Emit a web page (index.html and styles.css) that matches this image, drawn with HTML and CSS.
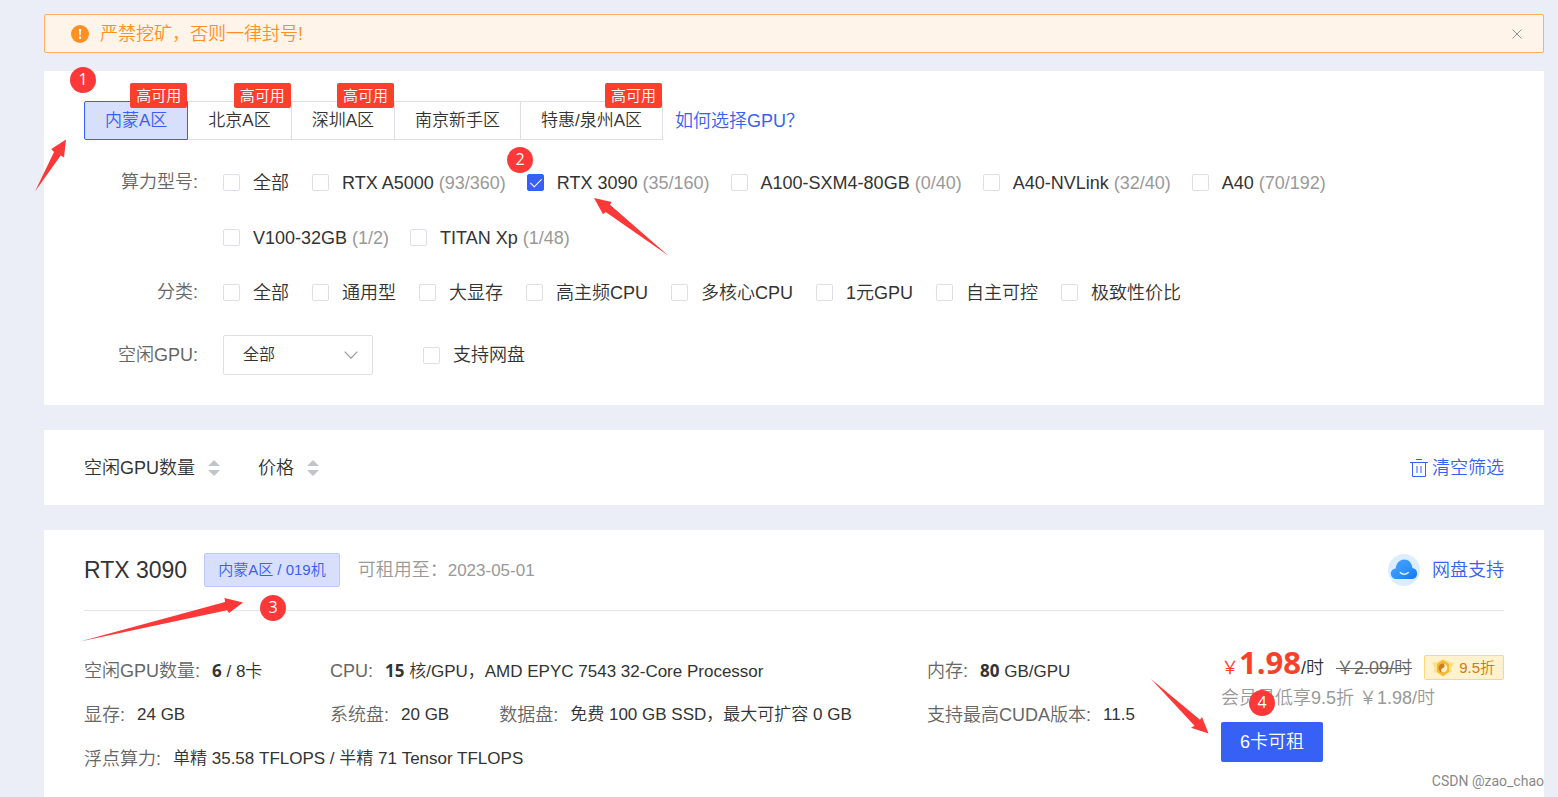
FILE: index.html
```html
<!DOCTYPE html>
<html lang="zh-CN">
<head>
<meta charset="utf-8">
<meta name="viewport" content="width=device-width, initial-scale=1">
<title>GPU 租用</title>
<link rel="stylesheet" href="styles.css">
</head>
<body>
<main class="page">
  <div class="alert" role="alert">
    <svg class="alert-icon" viewBox="0 0 18 18" aria-hidden="true"><circle cx="9" cy="9" r="9" fill="#ff9021"/><path d="M7.900 4h2.200l-.4 6.200H8.300z" fill="#fff"/><circle cx="9" cy="12.800" r="1.200" fill="#fff"/></svg>
    <p class="alert-text">严禁挖矿，否则一律封号!</p>
    <button class="alert-close" type="button" aria-label="关闭"><svg viewBox="0 0 12 12"><path d="M1.500 1.500l9 9M10.500 1.500l-9 9" fill="none" stroke="#909399"/></svg></button>
  </div>

  <section class="card filters">
    <div class="regions">
      <div class="tabs">
        <button class="tab tab-active" type="button">内蒙A区<span class="tab-badge">高可用</span></button>
        <button class="tab" type="button">北京A区<span class="tab-badge">高可用</span></button>
        <button class="tab" type="button">深圳A区<span class="tab-badge">高可用</span></button>
        <button class="tab" type="button">南京新手区</button>
        <button class="tab" type="button">特惠/泉州A区<span class="tab-badge">高可用</span></button>
      </div>
      <a class="link" href="#">如何选择GPU？</a>
    </div>

    <div class="row">
      <span class="row-label">算力型号:</span>
      <div class="options">
        <label class="option"><input type="checkbox">全部</label>
        <label class="option model"><input type="checkbox"><span>RTX A5000 <span class="muted">(93/360)</span></span></label>
        <label class="option model"><input type="checkbox" checked><span>RTX 3090 <span class="muted">(35/160)</span></span></label>
        <label class="option model"><input type="checkbox"><span>A100-SXM4-80GB <span class="muted">(0/40)</span></span></label>
        <label class="option model"><input type="checkbox"><span>A40-NVLink <span class="muted">(32/40)</span></span></label>
        <label class="option model"><input type="checkbox"><span>A40 <span class="muted">(70/192)</span></span></label>
        <label class="option model"><input type="checkbox"><span>V100-32GB <span class="muted">(1/2)</span></span></label>
        <label class="option model"><input type="checkbox"><span>TITAN Xp <span class="muted">(1/48)</span></span></label>
      </div>
    </div>
    <div class="row">
      <span class="row-label">分类:</span>
      <div class="options">
        <label class="option"><input type="checkbox">全部</label>
        <label class="option"><input type="checkbox">通用型</label>
        <label class="option"><input type="checkbox">大显存</label>
        <label class="option"><input type="checkbox">高主频CPU</label>
        <label class="option"><input type="checkbox">多核心CPU</label>
        <label class="option"><input type="checkbox">1元GPU</label>
        <label class="option"><input type="checkbox">自主可控</label>
        <label class="option"><input type="checkbox">极致性价比</label>
      </div>
    </div>
    <div class="row row-last">
      <label class="row-label" for="idle">空闲GPU:</label>
      <div class="select-wrap">
        <select id="idle" class="select"><option>全部</option></select>
        <svg class="select-arrow" viewBox="0 0 14 8" aria-hidden="true"><path d="M.7.7L7 7.200 13.300.7" fill="none" stroke="#999" stroke-width="1.200"/></svg>
      </div>
      <label class="option"><input type="checkbox">支持网盘</label>
    </div>

    <span class="step step-1">1</span>
    <span class="step step-2">2</span>
    <svg class="arrow arrow-1" viewBox="0 0 32 53" aria-hidden="true"><path d="M31 .5L16.300 10l2.700 3L0 52.500 25.700 16.500l3.300 2z"/></svg>
    <svg class="arrow arrow-2" viewBox="0 0 75 58" aria-hidden="true"><path d="M0 0l17.700 4-1.700 2.700L74.500 57.700 11.700 14 9 16.300z"/></svg>
  </section>

  <section class="card sortbar">
    <button class="sort" type="button">空闲GPU数量<svg viewBox="0 0 12 16"><path d="M6 0l6 6H0zM0 10h12l-6 6z" fill="#c0c4cc"/></svg></button>
    <button class="sort" type="button">价格<svg viewBox="0 0 12 16"><path d="M6 0l6 6H0zM0 10h12l-6 6z" fill="#c0c4cc"/></svg></button>
    <button class="clear" type="button"><svg viewBox="0 0 18 18"><path d="M0 3.500h18M6 .5h6M2.500 3.500v14h13v-14M7 7v7M11 7v7" fill="none" stroke="#3761f6"/></svg>清空筛选</button>
  </section>

  <article class="card machine">
    <header class="machine-head">
      <h2 class="machine-name">RTX 3090</h2>
      <span class="machine-tag">内蒙A区 / 019机</span>
      <p class="machine-until">可租用至：<span class="date">2023-05-01</span></p>
      <a class="drive" href="#">
        <svg viewBox="0 0 32 32" aria-hidden="true"><defs><linearGradient id="cloud" x1="0" y1="0" x2="1" y2="1"><stop offset="0" stop-color="#4ba3ff"/><stop offset=".5" stop-color="#3493ff"/><stop offset="1" stop-color="#0d78f8"/></linearGradient></defs><circle cx="16" cy="16" r="16" fill="#dcedff"/><path d="M8.500 25a5.200 5.200 0 0 1-.8-10.600C8.300 9 11.500 5.500 16.200 5.500c4.500 0 7.600 3.400 8.200 8.400a5.600 5.600 0 0 1-.4 11.100z" fill="url(#cloud)"/><path d="M12.300 18.500c2 2.300 5.800 2.300 8 0" fill="none" stroke="#d9f1ff" stroke-width="1.500" stroke-linecap="round"/></svg>
        网盘支持
      </a>
    </header>
    <div class="machine-body">
      <dl class="specs">
        <div class="spec"><dt>空闲GPU数量:</dt><dd><b>6</b> / 8卡</dd></div>
        <div class="spec"><dt>CPU:</dt><dd><b>15</b> 核/GPU，AMD EPYC 7543 32-Core Processor</dd></div>
        <div class="spec"><dt>内存:</dt><dd><b>80</b> GB/GPU</dd></div>
        <div class="spec"><dt>显存:</dt><dd>24 GB</dd></div>
        <div class="spec-pair">
          <div class="spec"><dt>系统盘:</dt><dd>20 GB</dd></div>
          <div class="spec"><dt>数据盘:</dt><dd>免费 100 GB SSD，最大可扩容 0 GB</dd></div>
        </div>
        <div class="spec"><dt>支持最高CUDA版本:</dt><dd>11.5</dd></div>
        <div class="spec spec-wide"><dt>浮点算力:</dt><dd>单精 35.58 TFLOPS / 半精 71 Tensor TFLOPS</dd></div>
      </dl>
      <div class="pricing">
        <div class="price-line">
          <span class="price"><span class="yen">￥</span><strong>1.98</strong>/时</span>
          <del class="old-price">￥2.09/时</del>
          <span class="discount"><svg viewBox="0 0 22 18" aria-hidden="true"><path d="M0 4l5-1 6-3 6 3 5 1-3 5 1 4-4 1-5 4-5-4-4-1 1-4z" fill="#ffe07c"/><path d="M5 5l6-4 6 4v8l-6 4-6-4z" fill="#f5b832"/><circle cx="11" cy="9" r="4.500" fill="#cf7d1c"/><path d="M11 13.500c-3-1-2-4 0-4.500s2-3.500 0-4.500a4.500 4.500 0 0 1 0 9z" fill="#fff0c9"/></svg>9.5折</span>
        </div>
        <p class="member">会员最低享9.5折 ￥1.98/时</p>
        <button class="rent" type="button">6卡可租</button>
        <span class="step step-4">4</span>
        <svg class="arrow arrow-4" viewBox="0 0 58 55" aria-hidden="true"><path d="M57.500 54.500L51 38l-2 2.700L0 0l43.500 46.700-3.500 2z"/></svg>
      </div>
    </div>
    <span class="step step-3">3</span>
    <svg class="arrow arrow-3" viewBox="0 0 164 44" aria-hidden="true"><path d="M163 4.500L144.500 0l.5 4L0 43.500l147-31.300 2 2.800z"/></svg>
    <span class="watermark">CSDN @zao_chao</span>
  </article>
</main>
</body>
</html>
```

FILE: styles.css
```css
* { box-sizing: border-box; }

body {
  margin: 0;
  background: #ebeef6;
  color: #333;
  font: 350 18px/24px "Liberation Sans", Arial, "Noto Sans CJK SC", sans-serif;
}

button, select, input { font: inherit; color: inherit; }
button { cursor: pointer; }
h2, p, dl, dd { margin: 0; font-weight: inherit; }
a { color: #3761f6; text-decoration: none; }

.page {
  display: flex;
  flex-direction: column;
  min-height: 100vh;
  padding: 14px 14px 0 44px;
}

.card { position: relative; background: #fff; padding: 0 40px; }
.muted { color: #999; }

.alert {
  display: flex;
  align-items: center;
  height: 39px;
  padding: 0 20px 0 26px;
  border: 1px solid #ffb061;
  border-radius: 2px;
  background: #fff4e9;
  color: #ff9021;
}
.alert-icon { width: 18px; height: 18px; margin-right: 11px; }
.alert-text { flex: 1; }
.alert-close { display: flex; padding: 0; border: 0; background: none; }
.alert-close svg { width: 12px; height: 12px; }

.filters { margin-top: 18px; padding-top: 30px; padding-bottom: 30px; }
.regions { display: flex; align-items: center; gap: 12px; margin-bottom: 15px; }
.tabs { display: flex; }
.tab {
  position: relative;
  height: 39px;
  margin-right: -1px;
  padding: 0 20px;
  border: 1px solid #dcdfe6;
  background: #fff;
  font-size: 17px;
}
.tab:last-child { margin-right: 0; }
.tab-active {
  z-index: 1;
  border-color: #3761f6;
  border-radius: 2px 0 0 2px;
  background: #d7dffd;
  color: #3761f6;
}
.tab-badge {
  position: absolute;
  top: -19px;
  right: 0;
  padding: 0 6px;
  border-radius: 2px;
  background: #fa3f2b;
  color: #fff;
  font-size: 15px;
  line-height: 25px;
  white-space: nowrap;
}

.row { display: flex; }
.row-label {
  flex: none;
  width: 114px;
  margin-right: 25px;
  color: #666;
  line-height: 55px;
  text-align: right;
}
.options { display: flex; flex-wrap: wrap; }
.option {
  display: flex;
  align-items: center;
  height: 55px;
  margin-right: 23px;
  white-space: nowrap;
}
.option.model { margin-right: 21px; }
.option input {
  position: relative;
  appearance: none;
  width: 17px;
  height: 17px;
  margin: 0 13px 0 0;
  border: 1px solid #dcdfe6;
  border-radius: 2px;
  background: #fff;
}
.option input:checked { border-color: #3761f6; background: #3761f6; }
.option input:checked::after {
  content: "";
  position: absolute;
  left: 5px;
  top: 1px;
  width: 5px;
  height: 10px;
  border: solid #fff;
  border-width: 0 1px 1px 0;
  transform: rotate(45deg);
}
.row-last { align-items: center; margin-top: 15px; }
.row-last .row-label, .row-last .option { height: 40px; line-height: 40px; }
.select-wrap { position: relative; width: 150px; margin-right: 50px; }
.select {
  appearance: none;
  display: block;
  width: 100%;
  height: 40px;
  padding: 0 19px;
  border: 1px solid #dcdfe6;
  border-radius: 2px;
  background: #fff;
  font-size: 16px;
}
.select-arrow {
  position: absolute;
  top: 16px;
  right: 15px;
  width: 14px;
  height: 8px;
  pointer-events: none;
}

.sortbar { display: flex; align-items: center; gap: 38px; height: 75px; margin-top: 25px; }
.sort, .clear { display: flex; align-items: center; padding: 0; border: 0; background: none; }
.sort svg { width: 12px; height: 16px; margin-left: 13px; }
.clear { margin-left: auto; gap: 4px; color: #3761f6; }
.clear svg { width: 18px; height: 18px; }

.machine { flex: 1; margin-top: 25px; padding-bottom: 16px; }
.machine-head {
  display: flex;
  align-items: center;
  height: 81px;
  border-bottom: 1px solid #e4e4ee;
}
.machine-name { font-size: 23px; }
.machine-tag {
  margin: 0 18px 0 17px;
  padding: 0 13px;
  border: 1px solid #bccafc;
  border-radius: 2px;
  background: #d7dffd;
  color: #3761f6;
  font-size: 15px;
  line-height: 32px;
}
.machine-until { color: #999; }
.date { font-size: 17px; }
.drive { display: flex; align-items: center; gap: 12px; margin-left: auto; }
.drive svg { width: 32px; height: 32px; }

.machine-body { display: grid; grid-template-columns: 1137fr 283fr; }
.specs {
  display: grid;
  grid-template-columns: 246fr 597fr 294fr;
  grid-auto-rows: 44px;
  align-items: center;
  padding-top: 38px;
}
.spec { display: flex; gap: 12px; font-size: 17px; white-space: nowrap; }
.spec dt { color: #666; font-size: 18px; }
.spec b { font-family: "Open Sans", sans-serif; font-weight: 700; }
.spec-pair { display: flex; gap: 50px; }
.spec-wide { grid-column: 1 / -1; }

.pricing { position: relative; padding-top: 30px; white-space: nowrap; }
.price-line { display: flex; align-items: flex-end; height: 45px; }
.price { line-height: 36px; }
.price strong { font: 700 31px/36px "Open Sans", sans-serif; color: #fa3f2b; }
.yen { color: #fa3f2b; }
.old-price { margin: 0 0 6px 12px; color: #666; }
.discount {
  display: flex;
  align-items: center;
  gap: 5px;
  height: 25px;
  margin: 0 0 6px auto;
  padding: 0 8px 0 7px;
  border: 1px solid #fbd685;
  border-radius: 2px;
  background: #fff2cf;
  color: #d07a14;
  font-size: 15px;
}
.discount svg { width: 22px; height: 18px; }
.member { margin-bottom: 12px; color: #999; }
.rent {
  height: 40px;
  padding: 0 19px;
  border: 0;
  border-radius: 2px;
  background: #3761f6;
  color: #fff;
}

/* Numbered tutorial callouts laid over the cards */
.step {
  position: absolute;
  z-index: 2;
  width: 26px;
  height: 26px;
  border-radius: 50%;
  background: #fd3838;
  color: #fff;
  font: 400 16px/24px "Open Sans", sans-serif;
  text-align: center;
}
.step-1 { left: 26px; top: -4px; }
.step-2 { left: 463px; top: 76px; }
.step-3 { left: 216px; top: 65px; }
.step-4 { left: 28px; top: 79px; }
.arrow { position: absolute; z-index: 2; fill: #fd3838; pointer-events: none; }
.arrow-1 { left: -9px; top: 68px; width: 32px; height: 53px; }
.arrow-2 { left: 550px; top: 127px; width: 75px; height: 58px; }
.arrow-3 { left: 36px; top: 68px; width: 164px; height: 44px; }
.arrow-4 { left: -70px; top: 68px; width: 58px; height: 55px; }

.watermark {
  position: absolute;
  right: 0;
  bottom: 4px;
  color: #888;
  font: 400 14px/24px Roboto, sans-serif;
}
```
